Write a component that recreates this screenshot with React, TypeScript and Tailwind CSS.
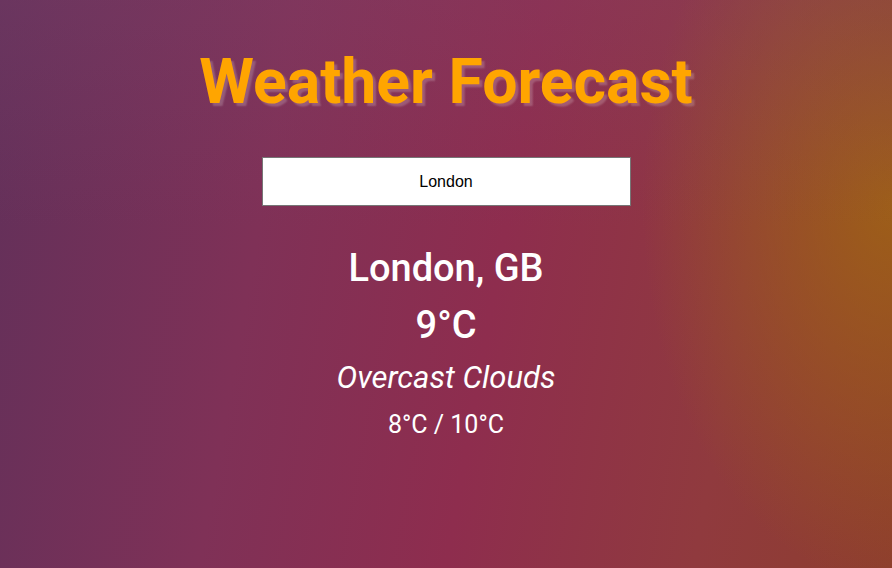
import { useState } from "react";

const weather = {
  city: "London",
  country: "GB",
  temp: 9,
  description: "Overcast Clouds",
  min: 8,
  max: 10,
};

export default function App() {
  const [query, setQuery] = useState("London");

  return (
    <div className="relative min-h-[568px] w-full overflow-hidden bg-[linear-gradient(100deg,#62305a_0%,#7f3157_30%,#8e2d4e_55%,#903a3e_80%,#8e3e2e_100%)] font-['Roboto',sans-serif] text-white">
      <div className="pointer-events-none absolute inset-0 bg-[radial-gradient(ellipse_250px_380px_at_100%_36%,rgba(160,100,20,0.85),rgba(160,100,20,0)_100%)]" />
      <div className="pointer-events-none absolute inset-0 bg-[linear-gradient(180deg,rgba(130,70,110,0.25)_0%,rgba(0,0,0,0)_40%)]" />

      <main className="relative flex flex-col items-center pt-[44px]">
        <h1 className="text-[62.5px] font-bold leading-[76px] text-[#ffa500] [text-shadow:3px_3px_2px_rgba(255,255,255,0.2)]">
          Weather Forecast
        </h1>

        <input
          value={query}
          onChange={(e) => setQuery(e.target.value)}
          className="mt-[37px] h-[49px] w-[369px] border border-[#767676] bg-white text-center font-['Liberation_Sans',Arial,sans-serif] text-base text-black outline-none"
        />

        <section className="mt-[39px] flex flex-col items-center">
          <h2 className="text-[38px] font-medium leading-[46px]">
            {weather.city}, {weather.country}
          </h2>
          <p className="mt-[11px] text-[38px] font-medium leading-[46px]">
            {weather.temp}°C
          </p>
          <p className="mt-[11px] text-[31px] italic leading-[38px]">
            {weather.description}
          </p>
          <p className="mt-[13px] text-[25px] leading-[30px]">
            {weather.min}°C / {weather.max}°C
          </p>
        </section>
      </main>
    </div>
  );
}
